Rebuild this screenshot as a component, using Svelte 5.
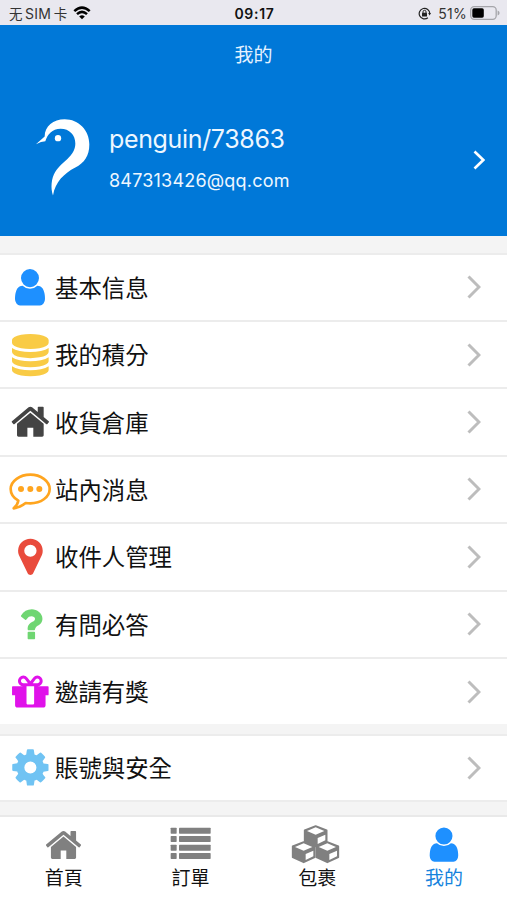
<script>
  const userPath =
    'M1536 1399q0 109-62.5 187t-150.5 78h-854q-88 0-150.5-78t-62.5-187q0-85 8.5-160.5t31.5-152 58.5-131 94-89 134.5-34.5q131 128 313 128t313-128q76 0 134.5 34.5t94 89 58.5 131 31.5 152 8.5 160.5zm-256-887q0 159-112.5 271.5t-271.5 112.5-271.5-112.5-112.5-271.5 112.5-271.5 271.5-112.5 271.5 112.5 112.5 271.5z';
  const homePath =
    'M1408 992v480q0 26-19 45t-45 19h-384v-384h-256v384h-384q-26 0-45-19t-19-45v-480q0-1 .5-3t.5-3l575-474 575 474q1 2 1 6zm223-69l-62 74q-8 9-21 11h-3q-13 0-21-7l-692-577-692 577q-12 8-24 7-13-2-21-11l-62-74q-8-10-7-23.5t11-21.5l719-599q32-26 76-26t76 26l244 204v-195q0-14 9-23t23-9h192q14 0 23 9t9 23v408l219 182q10 8 11 21.5t-7 23.5z';

  const main = [
    { label: '基本信息', color: '#1e90ff', top: 12, move: '27 48', scale: '.0703 .071', d: userPath },
    {
      label: '我的積分', color: '#f9cb45', top: 214, move: '36 250', scale: '.0716 .0708',
      d: 'M768 768q237 0 443-43t325-127v170q0 69-103 128t-280 93.5-385 34.5-385-34.5-280-93.5-103-128v-170q119 84 325 127t443 43zm0 768q237 0 443-43t325-127v170q0 69-103 128t-280 93.5-385 34.5-385-34.5-280-93.5-103-128v-170q119 84 325 127t443 43zm0-384q237 0 443-43t325-127v170q0 69-103 128t-280 93.5-385 34.5-385-34.5-280-93.5-103-128v-170q119 84 325 127t443 43zm0-1152q208 0 385 34.5t280 93.5 103 128v128q0 69-103 128t-280 93.5-385 34.5-385-34.5-280-93.5-103-128v-128q0-69 103-128t280-93.5 385-34.5z'
    },
    { label: '收貨倉庫', color: '#444444', top: -4, move: '33.3 31.5', scale: '.0694 .07', d: homePath },
    { label: '站內消息', color: '#ffa51f', top: 199, chat: true },
    {
      label: '收件人管理', color: '#e94b3c', top: -4, move: '26.5 31', scale: '.0722 .071',
      d: 'M1152 640q0-106-75-181t-181-75-181 75-75 181 75 181 181 75 181-75 75-181zm256 0q0 109-33 179l-364 774q-16 33-47.5 52t-67.5 19-67.5-19-46.5-52l-365-774q-33-70-33-179 0-212 150-362t362-150 362 150 150 362z'
    },
    {
      label: '有問必答', color: '#6fd672', top: 198, move: '29.3 235', scale: '.0698 .0703',
      d: 'M1088 1256v240q0 16-12 28t-28 12h-240q-16 0-28-12t-12-28v-240q0-16 12-28t28-12h240q16 0 28 12t12 28zm316-600q0 54-15.5 101t-35 76.5-55 59.5-57.5 43.5-61 35.5q-41 23-68.5 65t-27.5 67q0 17-12 32.5t-28 15.5h-240q-15 0-25.5-18.5t-10.5-37.5v-45q0-83 65-156.5t143-108.5q59-27 84-56t25-76q0-42-46.5-74t-107.5-32q-65 0-108 29-35 25-107 115-13 16-31 16-12 0-25-8l-164-125q-13-10-15.5-25t5.5-28q160-266 464-266 80 0 161 31t146 83 106 127.5 41 158.5z'
    },
    {
      label: '邀請有獎', color: '#e012ea', top: 25, move: '27 61', scale: '.0714 .0714',
      d: 'M1056 1356v-716h-320v716q0 25 18 38.5t46 13.5h192q28 0 46-13.5t18-38.5zm-456-844h195l-126-161q-26-31-69-31-40 0-68 28t-28 68 28 68 68 28zm688-96q0-40-28-68t-68-28q-43 0-69 31l-125 161h194q40 0 68-28t28-68zm376 256v320q0 14-9 23t-23 9h-96v416q0 40-28 68t-68 28h-1088q-40 0-68-28t-28-68v-416h-96q-14 0-23-9t-9-23v-320q0-14 9-23t23-9h440q-93 0-158.5-65.5t-65.5-158.5 65.5-158.5 158.5-65.5q107 0 168 77l128 165 128-165q61-77 168-77 93 0 158.5 65.5t65.5 158.5-65.5 158.5-158.5 65.5h440q14 0 23 9t9 23z'
    }
  ];
  const account = [
    {
      label: '賬號與安全', color: '#70c3f3', top: 254, move: '27.7 288', scale: '.0708 .0708',
      d: 'M1152 896q0-106-75-181t-181-75-181 75-75 181 75 181 181 75 181-75 75-181zm512-109v222q0 12-8 23t-20 13l-185 28q-19 54-39 91 35 50 107 138 10 12 10 25t-9 23q-27 37-99 108t-94 71q-12 0-26-9l-138-108q-44 23-91 38-16 136-29 186-7 28-36 28h-222q-14 0-24.5-8.5t-11.5-21.5l-28-184q-49-16-90-37l-141 107q-10 9-25 9-14 0-25-11-126-114-165-168-7-10-7-23 0-12 8-23 15-21 51-66.5t54-70.5q-27-50-41-99l-183-27q-13-2-21-12.5t-8-23.5v-222q0-12 8-23t19-13l186-28q14-46 39-92-40-57-107-138-10-12-10-24 0-10 9-23 26-36 98.5-107.5t94.5-71.5q13 0 26 10l138 107q44-23 91-38 16-136 29-186 7-28 36-28h222q14 0 24.5 8.5t11.5 21.5l28 184q49 16 90 37l142-107q9-9 24-9 13 0 25 10 129 119 165 170 7 8 7 22 0 12-8 23-15 21-51 66.5t-54 70.5q26 50 41 98l183 28q13 2 21 12.5t8 23.5z'
    }
  ];
</script>

{#snippet row(item)}
  <li class="row">
    <svg class="icon" viewBox="0 {item.top} 165 198" fill={item.color}>
      {#if item.chat}
        <path d="M91 255C122 255 149 274 149 298C149 323 122 341 91 341Q84 341 77 340Q61 353 41 356Q53 346 55 333C41 325 32 313 32 298C32 274 60 255 91 255Z" fill="none" stroke={item.color} stroke-width="8" stroke-linejoin="round" />
        <circle cx="63" cy="298" r="9" /><circle cx="91" cy="298" r="9" /><circle cx="118" cy="298" r="9" />
      {:else}
        <path transform="translate({item.move}) scale({item.scale})" d={item.d} />
      {/if}
    </svg>
    <span class="label">{item.label}</span>
    <svg class="chevron" viewBox="0 0 14 24"><path d="M1.5 1.5 12 12 1.5 22.5" /></svg>
  </li>
{/snippet}

<div class="app">
  <div class="status">
    <div class="left">
      <span class="carrier">无<b>SIM</b>卡</span>
      <svg class="wifi" viewBox="0 0 18 14">
        <path d="M1.3 5.2Q9-2 16.7 5.2M4 8.2Q9 3.6 14 8.2" fill="none" stroke="#000" stroke-width="2.5" />
        <path d="M6.2 10.4Q9 8 11.8 10.4L9 13.3Z" />
      </svg>
    </div>
    <span class="time">09:17</span>
    <div class="right">
      <svg class="lock" viewBox="0 0 13 13">
        <path d="M9.9 10.7A5.3 5.3 0 1 1 11.8 6.5" fill="none" stroke="#222" stroke-width="1.2" />
        <path d="M10.2 6H13L11.6 8.4Z" fill="#222" />
        <rect x="4" y="5.8" width="5" height="3.7" rx=".5" fill="#222" />
        <path d="M5 6V4.8a1.5 1.5 0 0 1 3 0V6" fill="none" stroke="#222" />
      </svg>
      <span class="percent">51%</span>
      <svg class="battery" viewBox="0 0 30 14">
        <rect x=".7" y=".7" width="25.5" height="12.6" rx="3.5" fill="none" stroke="#a5a5aa" stroke-width="1.3" />
        <rect x="2.3" y="2.3" width="11.5" height="9.4" rx="1.6" />
        <path d="M27.6 4.6q2 .8 2 2.4t-2 2.4Z" fill="#a5a5aa" />
      </svg>
    </div>
  </div>

  <header>
    <h1>我的</h1>
    <div class="profile">
      <svg class="logo" viewBox="105 54 165 236">
        <path fill="#fff" d="M108 132Q125 117 134 109C134 78 160 57 194 57C236 57 268 90 268 132C268 168 253 187 226 202C192 220 166 245 159 286C151 264 154 234 166 215C185 184 226 169 226 130C226 105 208 86 182 86C156 86 143 103 136 123Q124 123 108 132Z" />
        <circle cx="174" cy="114" r="9.5" fill="#fff" />
      </svg>
      <div class="who">
        <span class="name">penguin/73863</span>
        <span class="mail">847313426@qq.com</span>
      </div>
      <svg class="go" viewBox="0 0 12 20"><path d="M1.5 1.5 10.3 10 1.5 18.5" /></svg>
    </div>
  </header>

  <main>
    <ul class="group">
      {#each main as item}{@render row(item)}{/each}
    </ul>
    <ul class="group last">
      {#each account as item}{@render row(item)}{/each}
    </ul>
  </main>

  <nav>
    <a class="tab">
      <svg viewBox="99 60 180 138" fill="#808080"><path transform="translate(136 79) scale(.0655 .0658)" d={homePath} /></svg>
      <span>首頁</span>
    </a>
    <a class="tab">
      <svg viewBox="480 60 180 138" fill="#808080">
        {#each [86, 111, 137, 162] as y}
          <rect x="512" {y} width="18" height="18" rx="2" /><rect x="537" {y} width="95" height="18" rx="2" />
        {/each}
      </svg>
      <span>訂單</span>
    </a>
    <a class="tab">
      <svg viewBox="110 60 180 138">
        {#each [[196, 80], [160, 128], [231, 128]] as [x, y]}
          <g transform="translate({x} {y})">
            <path d="M0 1 33 14V47L0 62-33 47V14Z" fill="#808080" stroke="#808080" stroke-width="5" stroke-linejoin="round" />
            <path d="M0 5 26 16 0 27-26 16ZM6 37 29 27V44L6 55Z" fill="#fff" />
          </g>
        {/each}
      </svg>
      <span>包裹</span>
    </a>
    <a class="tab active">
      <svg viewBox="492 60 180 138" fill="#1e90ff"><path transform="translate(522 77) scale(.0668)" d={userPath} /></svg>
      <span>我的</span>
    </a>
  </nav>
</div>

<style>
  :global(body) { margin: 0; }
  .app {
    width: 507px; height: 900px; overflow: hidden; display: flex; flex-direction: column;
    background: #f4f4f4; color: #111;
    font-family: Inter, 'Noto Sans CJK TC', sans-serif;
  }
  .status {
    height: 25px; flex: none; display: grid; grid-template-columns: 1fr auto 1fr; align-items: center;
    background: #e9e8ef; padding: 2px 7px 0 9px; box-sizing: border-box; font-size: 14px; line-height: 20px;
  }
  .left, .right { display: flex; align-items: center; }
  .right { justify-content: flex-end; }
  .carrier { font-family: Inter, 'Noto Sans CJK SC', sans-serif; color: #333; display: flex; gap: 2.5px; font-size: 13.5px; }
  .carrier b { font-weight: 400; font-size: 14px; letter-spacing: .3px; }
  .wifi { width: 18px; height: 14px; margin: -2px 0 0 6px; }
  .time { font-weight: 600; font-size: 14px; letter-spacing: .7px; }
  .lock { width: 13px; height: 13px; margin-right: 7px; }
  .percent { color: #333; font-size: 14px; letter-spacing: .3px; }
  .battery { width: 30px; height: 14px; margin: -1px 0 0 3px; }
  header { height: 211px; flex: none; background: #0078d8; color: #fff; }
  h1 { margin: 0; padding-top: 17px; font-size: 19px; font-weight: 400; line-height: 28px; text-align: center; color: #e5f2ff; }
  .profile { display: flex; align-items: flex-start; padding: 48px 22px 0 35px; }
  .logo { width: 55px; height: 79px; flex: none; }
  .who { margin-left: 19px; display: flex; flex-direction: column; flex: 1; color: #eef7ff; }
  .name { font-size: 25px; line-height: 32px; margin-top: 5px; letter-spacing: -.35px; }
  .mail { font-size: 18px; line-height: 24px; margin-top: 14px; letter-spacing: .2px; }
  .go { width: 12px; height: 20px; margin-top: 32px; }
  .go path { fill: none; stroke: #fff; stroke-width: 2.6; }
  main { height: 579px; flex: none; padding-top: 16.6px; box-sizing: border-box; }
  .group { list-style: none; margin: 0; padding: 0; }
  .row {
    height: 67.4px; box-sizing: border-box; border-top: 2px solid #ececec; background: #fff;
    display: flex; align-items: center; padding-right: 26px;
  }
  .last { margin-top: 9.2px; border-bottom: 2px solid #ececec; }
  .last .row { height: 66px; }
  .icon { width: 55px; height: 66px; flex: none; }
  .label { flex: 1; font-size: 23.4px; line-height: 34px; padding-top: 3px; }
  .chevron { width: 14px; height: 24px; }
  .chevron path { fill: none; stroke: #bdbdbd; stroke-width: 3; }
  nav { flex: 1; display: flex; background: #fff; border-top: 2px solid #e9e9e9; }
  .tab { flex: 1; display: flex; flex-direction: column; align-items: center; font-size: 19px; line-height: 26px; }
  .tab svg { width: 60px; height: 46px; margin-top: 2px; }
  .tab span { margin: 1px 0 0 1px; }
  .active { color: #1683dd; }
</style>
